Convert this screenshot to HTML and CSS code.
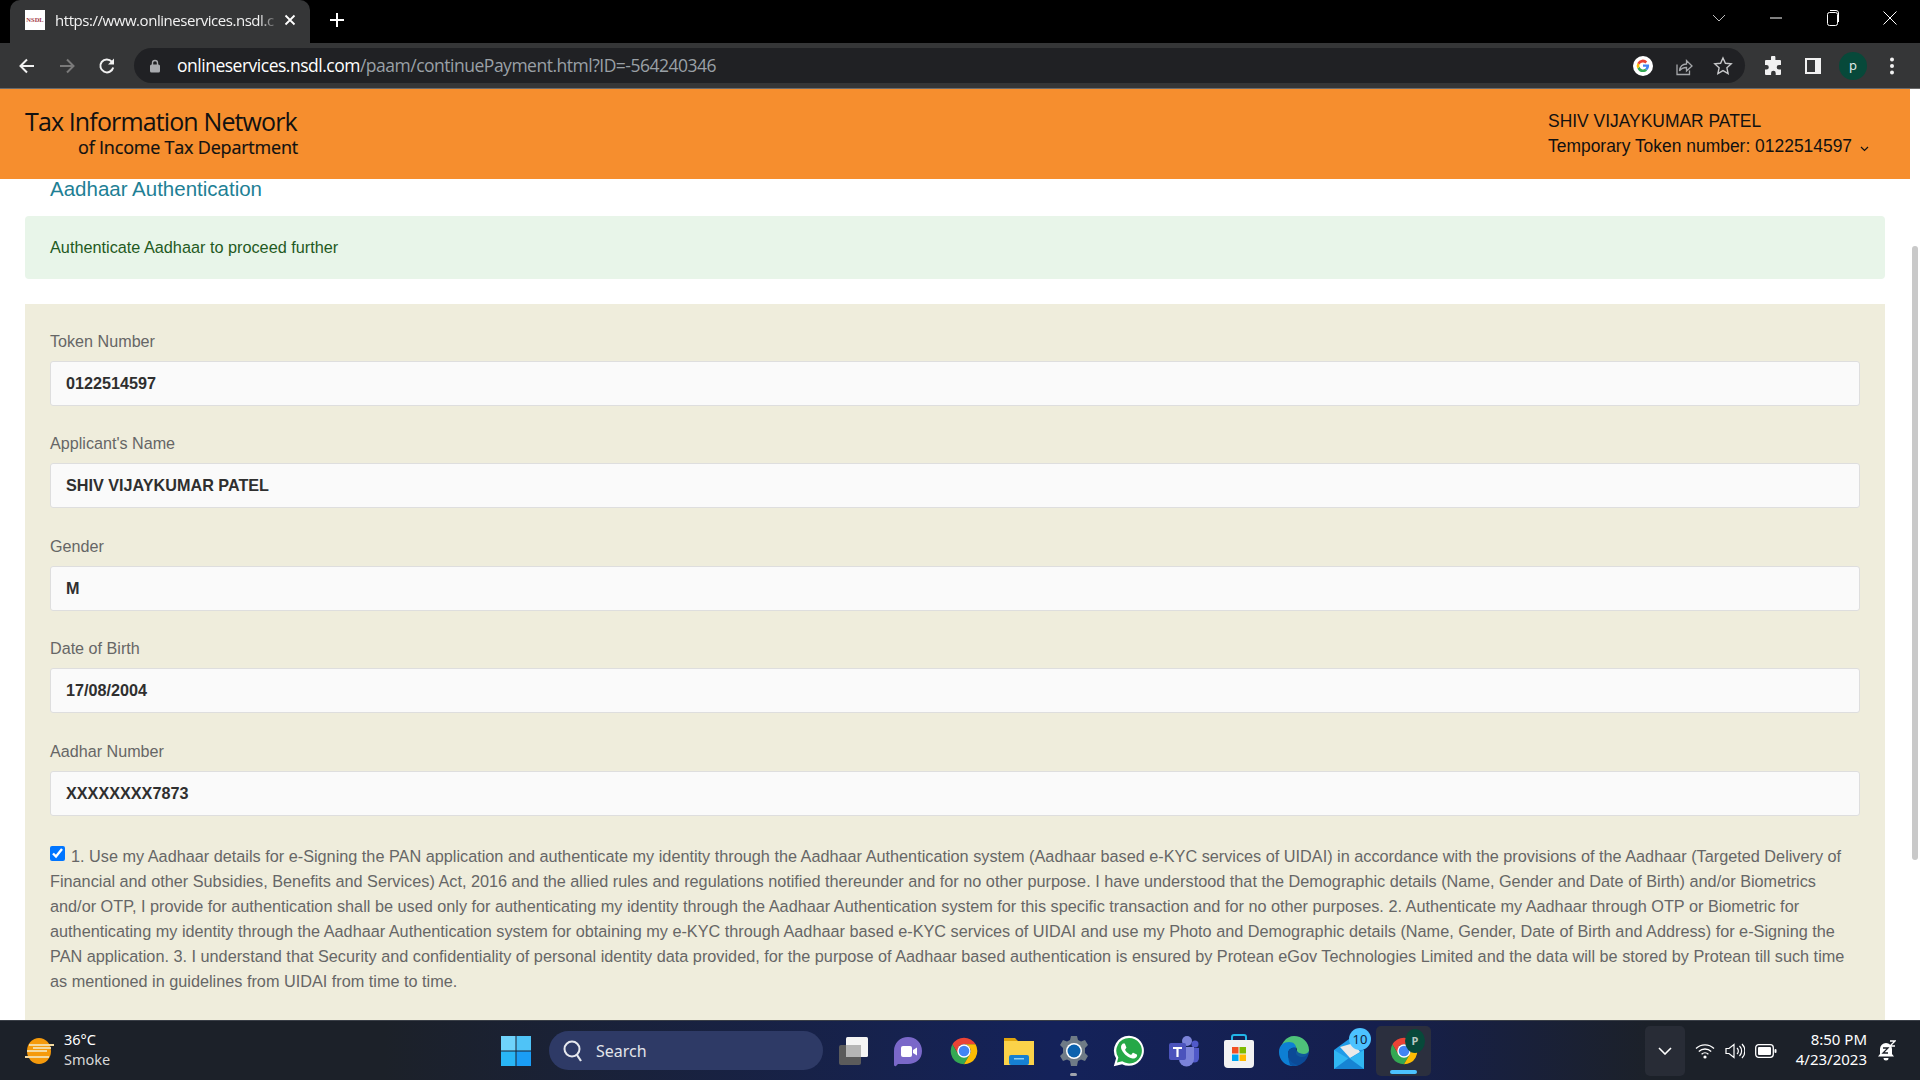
FILE: index.html
```html
<!DOCTYPE html>
<html lang="en">
<head>
<meta charset="utf-8">
<title>Aadhaar Authentication</title>
<link rel="stylesheet" href="styles.css">
</head>
<body>
<svg class="defs" width="0" height="0" aria-hidden="true">
  <symbol id="chrome" viewBox="0 0 24 24">
    <path fill="#ea4335" d="M3.34 7A10 10 0 0 1 20.66 7H12a5 5 0 0 0-4.33 2.5V14.5z"/>
    <path fill="#34a853" d="M3.34 7A10 10 0 0 0 12 22l4.33-7.5h-8.66z"/>
    <path fill="#fbbc04" d="M20.66 7A10 10 0 0 1 12 22l4.33-7.5A5 5 0 0 0 12 7z"/>
    <circle cx="12" cy="12" r="5" fill="#fff"/>
    <circle cx="12" cy="12" r="4" fill="#4285f4"/>
  </symbol>
</svg>

<div class="window">
  <div class="tabstrip">
    <div class="tab">
      <span class="favicon">NSDL</span>
      <span class="tab-title">https://www.onlineservices.nsdl.c</span>
      <svg class="tab-close" width="12" height="12" viewBox="0 0 12 12"><path d="M1.5 1.5l9 9M10.5 1.5l-9 9" stroke="#fff" stroke-width="1.8"/></svg>
    </div>
    <svg class="new-tab" width="16" height="16" viewBox="0 0 16 16"><path d="M8 1v14M1 8h14" stroke="#fff" stroke-width="2"/></svg>
    <div class="caption">
      <svg class="cap" width="14" height="10" viewBox="0 0 14 10"><path d="M1 2l6 6 6-6" fill="none" stroke="#bdbdbd"/></svg>
      <svg class="cap" width="14" height="14" viewBox="0 0 14 14"><path d="M1 7h12" stroke="#fff"/></svg>
      <svg class="cap" width="14" height="18" viewBox="0 0 14 18"><rect x="1.5" y="3.5" width="10" height="13" rx="2" fill="none" stroke="#fff"/><path d="M4 1.5h6a2.5 2.5 0 0 1 2.5 2.5v9" fill="none" stroke="#fff"/></svg>
      <svg class="cap" width="14" height="14" viewBox="0 0 14 14"><path d="M.5.5l13 13M13.500.5l-13 13" stroke="#fff"/></svg>
    </div>
  </div>

  <div class="toolbar">
    <svg class="nav" width="18" height="18" viewBox="0 0 18 18"><path d="M16 9H3M9 2.500L2.500 9 9 15.500" fill="none" stroke="#f1f1f1" stroke-width="2"/></svg>
    <svg class="nav" width="18" height="18" viewBox="0 0 18 18"><path d="M2 9h13M9 2.500L15.500 9 9 15.500" fill="none" stroke="#7a7a7a" stroke-width="2"/></svg>
    <svg class="nav" width="18" height="18" viewBox="0 0 18 18"><path d="M15.200 10.500A6.500 6.500 0 1 1 13.800 4.600" fill="none" stroke="#f1f1f1" stroke-width="2"/><path d="M16 1.500V7.500H10z" fill="#f1f1f1"/></svg>
    <div class="omnibox">
      <svg class="lock" width="12" height="14" viewBox="0 0 12 14"><path d="M3.500 6V4a2.500 2.500 0 0 1 5 0v2" fill="none" stroke="#a9abaf" stroke-width="1.400"/><rect x="1" y="5.500" width="10" height="8" rx="1.500" fill="#a9abaf"/></svg>
      <div class="url"><span class="url-host">onlineservices.nsdl.com</span>/paam/continuePayment.html?ID=-564240346</div>
      <div class="omni-icons">
        <svg width="20" height="20" viewBox="0 0 20 20"><circle cx="10" cy="10" r="10" fill="#fff"/><path d="M15.900 8.500H10v2.300h3.400a3.500 3.500 0 0 1-1.300 1.900l2 1.600c1.200-1.100 2-2.800 2-4.700 0-.4 0-.8-.2-1.100z" fill="#4285f4"/><path d="M10 16c1.600 0 3-.5 4.100-1.600l-2-1.600a3.700 3.700 0 0 1-5.600-2L4.400 12.400A6 6 0 0 0 10 16z" fill="#34a853"/><path d="M6.500 10.800a3.600 3.600 0 0 1 0-2.300L4.400 6.900a6 6 0 0 0 0 5.500z" fill="#fbbc05"/><path d="M10 6.400c.9 0 1.700.3 2.400 1l1.800-1.800A6 6 0 0 0 4.400 6.900l2.100 1.600A3.600 3.600 0 0 1 10 6.400z" fill="#ea4335"/></svg>
        <svg width="20" height="20" viewBox="0 0 20 20"><path d="M4 8.500V18.500H16.500V14.500" fill="none" stroke="#a5a7aa" stroke-width="1.300"/><path d="M6.500 15c.5-4.500 3.500-7 7-7V4.500l5.500 5.500-5.500 5v-3.500c-3 0-5.500 1.200-7 3.500z" fill="none" stroke="#a5a7aa" stroke-width="1.300"/></svg>
        <svg width="20" height="20" viewBox="0 0 20 20"><path d="M10 2l2.400 5.300 5.800.6-4.300 3.900 1.200 5.700-5.100-2.900-5.100 2.900 1.200-5.700L1.800 7.900l5.800-.6z" fill="none" stroke="#c8c9cb" stroke-width="1.400"/></svg>
      </div>
    </div>
    <div class="tool-icons">
      <svg width="20" height="20" viewBox="0 0 20 20"><path d="M8 1.500a2.200 2.200 0 0 1 4.400 0V4H17a1 1 0 0 1 1 1v4h-2a2.300 2.300 0 0 0 0 4.600h2V18a1 1 0 0 1-1 1h-4.300v-2a2.300 2.300 0 0 0-4.600 0v2H3a1 1 0 0 1-1-1v-4.500h1.500a2.300 2.300 0 0 0 0-4.600H2V5a1 1 0 0 1 1-1h5z" fill="#f1f1f1"/></svg>
      <svg width="20" height="20" viewBox="0 0 20 20"><path d="M2 2h16v16H2zM4 4v12h8V4z" fill="#f1f1f1" fill-rule="evenodd"/></svg>
      <span class="avatar">p</span>
      <svg class="menu-dots" width="6" height="20" viewBox="0 0 6 20"><circle cx="3" cy="3.500" r="2" fill="#f1f1f1"/><circle cx="3" cy="10" r="2" fill="#f1f1f1"/><circle cx="3" cy="16.500" r="2" fill="#f1f1f1"/></svg>
    </div>
  </div>

  <div class="viewport">
    <main class="page">
      <header class="site-header">
        <div class="logo">
          <div class="logo-main">Tax Information Network</div>
          <div class="logo-sub">of Income Tax Department</div>
        </div>
        <div class="user">
          <div>SHIV VIJAYKUMAR PATEL</div>
          <div class="user-token">Temporary Token number: 0122514597
            <svg class="user-caret" width="9" height="6" viewBox="0 0 9 6"><path d="M1 1l3.500 3.500L8 1" fill="none" stroke="#111" stroke-width="1.200"/></svg>
          </div>
        </div>
      </header>

      <div class="content">
        <h1 class="title">Aadhaar Authentication</h1>
        <div class="alert">Authenticate Aadhaar to proceed further</div>
        <form class="panel">
          <div class="field"><div class="field-label">Token Number</div><div class="field-value">0122514597</div></div>
          <div class="field"><div class="field-label">Applicant's Name</div><div class="field-value">SHIV VIJAYKUMAR PATEL</div></div>
          <div class="field"><div class="field-label">Gender</div><div class="field-value">M</div></div>
          <div class="field"><div class="field-label">Date of Birth</div><div class="field-value">17/08/2004</div></div>
          <div class="field"><div class="field-label">Aadhar Number</div><div class="field-value">XXXXXXXX7873</div></div>
          <p class="terms"><input class="terms-check" type="checkbox" checked>1. Use my Aadhaar details for e-Signing the PAN application and authenticate my identity through the Aadhaar Authentication system (Aadhaar based e-KYC services of UIDAI) in accordance with the provisions of the Aadhaar (Targeted Delivery of Financial and other Subsidies, Benefits and Services) Act, 2016 and the allied rules and regulations notified thereunder and for no other purpose. I have understood that the Demographic details (Name, Gender and Date of Birth) and/or Biometrics and/or OTP, I provide for authentication shall be used only for authenticating my identity through the Aadhaar Authentication system for this specific transaction and for no other purposes. 2. Authenticate my Aadhaar through OTP or Biometric for authenticating my identity through the Aadhaar Authentication system for obtaining my e-KYC through Aadhaar based e-KYC services of UIDAI and use my Photo and Demographic details (Name, Gender, Date of Birth and Address) for e-Signing the PAN application. 3. I understand that Security and confidentiality of personal identity data provided, for the purpose of Aadhaar based authentication is ensured by Protean eGov Technologies Limited and the data will be stored by Protean till such time as mentioned in guidelines from UIDAI from time to time.</p>
        </form>
      </div>
    </main>
    <div class="scrollbar"><div class="thumb"></div></div>
  </div>

  <footer class="taskbar">
    <div class="weather">
      <svg width="32" height="28" viewBox="0 0 32 28"><ellipse cx="16" cy="14" rx="12" ry="13" fill="#f59a0c"/><path d="M6 8h25M4 14h20M2 20h24M10 11h18" stroke="#f3d9a0" stroke-width="2.200"/></svg>
      <div class="weather-text"><div>36°C</div><div class="weather-sub">Smoke</div></div>
    </div>
    <div class="center">
      <div class="tb-cell">
        <svg width="30" height="30" viewBox="0 0 30 30"><rect width="14.500" height="14.500" fill="#6fd3fb"/><rect x="15.500" width="14.500" height="14.500" fill="#4fc3f7"/><rect y="15.500" width="14.500" height="14.500" fill="#29b6f6"/><rect x="15.500" y="15.500" width="14.500" height="14.500" fill="#1a9df5"/></svg>
      </div>
      <div class="search">
        <svg width="22" height="24" viewBox="0 0 22 24"><circle cx="10" cy="10" r="7.500" fill="none" stroke="#e6e8ee" stroke-width="2"/><path d="M15 16l4 6" stroke="#e6e8ee" stroke-width="2.200"/></svg>
        <span>Search</span>
      </div>
      <div class="tb-cell">
        <svg width="32" height="32" viewBox="0 0 32 32"><rect x="1" y="10" width="22" height="20" rx="2" fill="#5b5b5b"/><rect x="8" y="2" width="22" height="20" rx="1.500" fill="#f4f4f4"/><rect x="8" y="10" width="15" height="12" fill="#b5b5b5"/></svg>
      </div>
      <div class="tb-cell">
        <svg class="meet" width="32" height="32" viewBox="0 0 32 32"><path d="M16 2c8 0 14 6 14 14s-6 13-14 13H6l-2 2c-1 .5-2 0-2-1.500V16C2 8 8 2 16 2z" fill="#7a68c9"/><rect x="9" y="11" width="11" height="11" rx="2" fill="#fff"/><path d="M21 15l4-2.500v8L21 18z" fill="#fff"/></svg>
      </div>
      <div class="tb-cell"><svg width="32" height="32"><use href="#chrome"/></svg></div>
      <div class="tb-cell">
        <svg width="32" height="32" viewBox="0 0 32 32"><path d="M1 3h11l3 3h16v4H1z" fill="#e0a40c"/><rect x="1" y="6" width="30" height="24" fill="#fbd249"/><rect x="6" y="20" width="20" height="10" rx="2" fill="#1680d3"/><rect x="11" y="23" width="10" height="1.500" fill="#8fd0f5"/></svg>
      </div>
      <div class="tb-cell tb-running">
        <svg width="32" height="32" viewBox="0 0 32 32"><path d="M13 1h6l1 4 3 1.500 4-1.500 3 5-3 3v5l3 3-3 5-4-1.500L20 26l-1 5h-6l-1-5-3-1.500-4 1.500-3-5 3-3v-5L2 10l3-5 4 1.500L12 5z" fill="#6f7b86"/><circle cx="16" cy="16" r="8" fill="#fff"/><circle cx="16" cy="16" r="6.500" fill="#0c62ae"/></svg>
        <span class="run-dot"></span>
      </div>
      <div class="tb-cell">
        <svg width="32" height="32" viewBox="0 0 24 24"><path d="M12 .5A11.300 11.300 0 0 0 2.300 17.500L.6 23.500l6.200-1.600A11.300 11.300 0 1 0 12 .5z" fill="#fff"/><path d="M12 2.300a9.500 9.500 0 0 0-8 14.600l-1 3.800 3.900-1A9.500 9.500 0 1 0 12 2.300z" fill="#25a847"/><path fill="#fff" d="M17.472 14.382c-.297-.149-1.758-.867-2.030-.967-.273-.099-.471-.148-.670.150-.197.297-.767.966-.940 1.164-.173.199-.347.223-.644.075-.297-.150-1.255-.463-2.390-1.475-.883-.788-1.480-1.761-1.653-2.059-.173-.297-.018-.458.130-.606.134-.133.298-.347.446-.520.149-.174.198-.298.298-.497.099-.198.050-.371-.025-.520-.075-.149-.669-1.612-.916-2.207-.242-.579-.487-.500-.669-.510-.173-.008-.371-.010-.570-.010-.198 0-.520.074-.792.372-.272.297-1.040 1.016-1.040 2.479 0 1.462 1.065 2.875 1.213 3.074.149.198 2.096 3.200 5.077 4.487.709.306 1.262.489 1.694.625.712.227 1.360.195 1.871.118.571-.085 1.758-.719 2.006-1.413.248-.694.248-1.289.173-1.413-.074-.124-.272-.198-.570-.347z"/></svg>
      </div>
      <div class="tb-cell">
        <svg width="32" height="32" viewBox="0 0 32 32"><circle cx="19" cy="6" r="5" fill="#7b83d9"/><circle cx="27" cy="9" r="3.500" fill="#5059c9"/><path d="M22 13h9v10a4.500 4.500 0 0 1-9 0z" fill="#5059c9"/><path d="M11 12h15v12a7.500 7.500 0 0 1-15 0z" fill="#7b83d9"/><rect x="1" y="8" width="17" height="17" rx="2" fill="#4b53bc"/><path d="M5 12h9v2h-3.400v8H8.400v-8H5z" fill="#fff"/></svg>
      </div>
      <div class="tb-cell">
        <svg width="32" height="34" viewBox="0 0 32 34"><path d="M9 9V3a2 2 0 0 1 2-2h10a2 2 0 0 1 2 2v6" fill="none" stroke="#22b5e8" stroke-width="2"/><path d="M3 6h26a2 2 0 0 1 2 2v22a4 4 0 0 1-4 4H5a4 4 0 0 1-4-4V8a2 2 0 0 1 2-2z" fill="#f2f2f2"/><rect x="9" y="13" width="6.500" height="6.500" fill="#f25022"/><rect x="16.500" y="13" width="6.500" height="6.500" fill="#7fba00"/><rect x="9" y="20.500" width="6.500" height="6.500" fill="#00a4ef"/><rect x="16.500" y="20.500" width="6.500" height="6.500" fill="#ffb900"/></svg>
      </div>
      <div class="tb-cell">
        <svg width="32" height="32" viewBox="0 0 32 32"><path d="M16 1c8 0 15 6 15 14 0 4-3 7-7 7-3 0-6-2-6-4 0-1 1-2 1-3 0-3-3-5-6-5-6 0-11 5-12 10C2 9 8 1 16 1z" fill="#4ec27a"/><path d="M1 17C1 10 6 7 11 7c5 0 7 3 7 6-4-1-8 1-8 6 0 5 4 10 10 11-2 1-3 1-5 1C7 31 1 25 1 17z" fill="#0d7fd4"/><path d="M10 19c0-5 4-7 8-6 0 2 2 6 8 6 2 0 4-1 5-3 0 7-6 15-15 15-1 0-2 0-4-1-1-3-2-7-2-11z" fill="#0a4f9e" opacity=".9"/></svg>
      </div>
      <div class="tb-cell">
        <svg class="mail" width="30" height="30" viewBox="0 0 30 30"><path d="M0 11L15 0l15 11v19H0z" fill="#1f9be8"/><path d="M6 8l14-4 6 9-10 6z" fill="#e9e9e9"/><path d="M0 11l15 9 15-9v19H0z" fill="#30b7f3"/><path d="M0 30l15-11 15 11z" fill="#1684d3"/></svg>
        <span class="mail-badge">10</span>
      </div>
      <div class="tb-cell tb-active">
        <svg width="32" height="32"><use href="#chrome"/></svg>
        <span class="chrome-profile">P</span>
        <span class="active-bar"></span>
      </div>
    </div>
    <div class="tray">
      <div class="tray-btn"><svg width="14" height="8" viewBox="0 0 14 8"><path d="M1 1l6 6 6-6" fill="none" stroke="#fff" stroke-width="1.600"/></svg></div>
      <svg class="tray-ic" width="20" height="16" viewBox="0 0 20 16"><path d="M1 5.500a13 13 0 0 1 18 0M3.800 8.500a9 9 0 0 1 12.400 0M6.600 11.200a5 5 0 0 1 6.800 0" fill="none" stroke="#fff" stroke-width="1.300"/><circle cx="10" cy="14" r="1.600" fill="#fff"/></svg>
      <svg class="tray-ic" width="20" height="18" viewBox="0 0 20 18"><path d="M1 6.500h3L9 2.500v13l-5-4H1z" fill="none" stroke="#fff" stroke-width="1.200"/><path d="M12 6a4 4 0 0 1 0 6M14.500 4a7 7 0 0 1 0 10M17 2a10 10 0 0 1 0 14" fill="none" stroke="#fff" stroke-width="1.200"/></svg>
      <svg class="tray-ic" width="22" height="14" viewBox="0 0 22 14"><rect x=".7" y=".7" width="17.600" height="12.600" rx="3" fill="none" stroke="#fff" stroke-width="1.300"/><rect x="3" y="3" width="13" height="8" rx="1" fill="#fff"/><rect x="19.500" y="5" width="2" height="4" rx="1" fill="#fff"/></svg>
      <div class="clock"><div>8:50 PM</div><div>4/23/2023</div></div>
      <svg class="bell" width="18" height="22" viewBox="0 0 18 22"><path d="M8 3a6 6 0 0 1 6 6v5l2 2.500H0L2 14V9a6 6 0 0 1 6-6z" fill="#fff"/><path d="M5.500 18h5a2.500 2.500 0 0 1-5 0z" fill="#fff"/><path d="M5 8h5l-5 5h5" fill="none" stroke="#1c2129" stroke-width="1.300"/><path d="M12 1h5l-5 5h5" fill="none" stroke="#fff" stroke-width="1.300"/></svg>
    </div>
  </footer>
</div>
</body>
</html>
```
FILE: styles.css
```css
* { box-sizing: border-box; }
html, body { margin: 0; height: 100%; overflow: hidden; }
body { font-family: "Liberation Sans", Arial, sans-serif; background: #fff; }
.defs { display: block; height: 0; }
.window { display: flex; flex-direction: column; height: 1080px; }

/* Browser chrome */
.tabstrip { display: flex; align-items: center; height: 43px; background: #000; padding: 0 0 4px 10px; flex: none; }
.tab { display: flex; align-items: center; width: 300px; height: 43px; background: #353637; border-radius: 10px 10px 0 0; padding: 0 15px 4px; align-self: flex-end; margin-bottom: -4px; }
.favicon { width: 20px; height: 20px; background: #fff; color: #a33a48; font: bold 6.500px/20px "Liberation Serif", serif; text-align: center; overflow: hidden; flex: none; }
.tab-title { width: 219px; margin-left: 10px; font: 15px "Open Sans", sans-serif; color: #f2f2f2; white-space: nowrap; letter-spacing: -.45px; flex: none; -webkit-mask-image: linear-gradient(to right, #000 93%, rgba(0,0,0,.25)); mask-image: linear-gradient(to right, #000 93%, rgba(0,0,0,.25)); }
.tab-close { margin-left: 10px; flex: none; }
.new-tab { margin-left: 19px; }
.caption { margin-left: auto; display: flex; align-items: center; padding: 0 23px 4px 0; gap: 43px; }
.cap { flex: none; }

.toolbar { display: flex; align-items: center; height: 46px; background: #353637; border-bottom: 1px solid #6a6a6a; padding-left: 18px; flex: none; }
.nav { margin-right: 22px; flex: none; }
.nav:nth-child(3) { margin-right: 18px; }
.omnibox { display: flex; align-items: center; width: 1611px; height: 35px; background: #202124; border-radius: 18px; padding-left: 15px; flex: none; }
.lock { flex: none; }
.url { margin-left: 16px; padding-bottom: 2px; font: 17.500px "Open Sans", sans-serif; letter-spacing: -.49px; color: #9aa0a6; white-space: nowrap; }
.url-host { color: #fff; }
.omni-icons { margin-left: auto; display: flex; align-items: center; gap: 20px; padding-right: 12px; }
.tool-icons { display: flex; align-items: center; gap: 20px; margin-left: 18px; }
.avatar { width: 28px; height: 28px; border-radius: 50%; background: #07493a; color: #e8f0ee; font: 13px/26px "Open Sans", sans-serif; text-align: center; margin: 0 -4px; }
.menu-dots { margin-left: 6px; }

/* Page */
.viewport { flex: 1; min-height: 0; display: flex; overflow: hidden; }
.page { flex: 1; min-width: 0; }
.scrollbar { width: 10px; flex: none; padding: 157px 2px 0; }
.thumb { width: 6px; height: 614px; background: #c9c9c9; border-radius: 3px; }

.site-header { display: flex; justify-content: space-between; height: 90px; background: #f68e2e; padding: 18px 40px 0 25px; }
.logo { width: 273px; color: #111; }
.logo-main { font: 25px/28px "Open Sans", sans-serif; white-space: nowrap; letter-spacing: -.87px; }
.logo-sub { font: 18px/24px "Open Sans", sans-serif; text-align: right; white-space: nowrap; letter-spacing: -.2px; -webkit-text-stroke: .2px #111; }
.user { width: 322px; padding-top: 2px; font-size: 17.450px; line-height: 25px; color: #111; white-space: nowrap; }
.user-caret { margin-left: 3px; }

.content { padding: 0 25px; }
.title { margin: 0; padding: 0 25px; font-size: 20.500px; font-weight: 400; line-height: 20px; color: #1e7f95; height: 37px; }
.alert { height: 63px; padding: 0 25px; line-height: 63px; font-size: 16.250px; background: #e8f5e9; color: #1f5a22; border-radius: 4px; margin-bottom: 25px; }
.panel { background: #efeddc; padding: 25px 25px 40px; }
.field { margin-bottom: 25.400px; }
.field-label { font-size: 16.150px; line-height: 24px; color: #666; margin-bottom: 8px; }
.field-value { height: 45px; background: #fafafa; border: 1px solid #dedede; border-radius: 3px; padding: 0 15px; line-height: 43.500px; font-size: 16.200px; font-weight: 700; color: #2f2f2f; }
.terms { margin: 28px 0 0; font-size: 16.250px; line-height: 25px; color: #666; }
.terms-check { width: 15px; height: 15px; margin: 0 6px 0 0; vertical-align: 1px; }

/* Taskbar */
.taskbar { display: grid; grid-template-columns: 488px auto 1fr; align-items: center; height: 60px; flex: none; font-family: "Noto Sans", sans-serif; color: #fff; background: linear-gradient(to right, #1c2129 0, #1c2129 20%, #14225a 55%, #151f4d 72%, #1c2129 86%, #1c2129 100%); border-top: 1px solid #3a3f47; }
.weather { display: flex; align-items: center; padding: 0 0 4px 23px; }
.weather svg { flex: none; margin-top: 4px; }
.weather-text { margin-left: 9px; font-size: 14.500px; line-height: 20px; }
.weather-sub { color: #d8d8d8; }
.center { display: flex; align-items: center; }
.tb-cell { position: relative; display: flex; align-items: center; justify-content: center; width: 55px; height: 50px; flex: none; }
.search { display: flex; align-items: center; width: 274px; height: 39px; margin: 0 3px 0 6px; padding-left: 13px; background: #2e3a66; border-radius: 20px; font-size: 16px; color: #e3e5ea; gap: 12px; flex: none; }
.meet { margin-left: -2px; }
.run-dot { position: absolute; left: 24px; bottom: 0; width: 7px; height: 3px; background: #a0a4ac; border-radius: 2px; }
.mail { margin-top: 6px; }
.mail-badge { position: absolute; left: 28px; top: 2px; width: 22px; height: 22px; border-radius: 50%; background: #4cc2ff; color: #10243d; font-size: 13px; line-height: 22px; text-align: center; }
.tb-active { background: #2b2f3e; border-radius: 5px; }
.chrome-profile { position: absolute; left: 29px; top: 3px; width: 20px; height: 24px; border-radius: 50%; background: #07493a; color: #b8c8c2; font-size: 11px; font-weight: 700; line-height: 24px; text-align: center; }
.active-bar { position: absolute; left: 14px; bottom: 2px; width: 27px; height: 4px; border-radius: 2px; background: #4cc2ff; }
.tray { display: flex; align-items: center; justify-content: flex-end; padding-right: 24px; }
.tray-btn { display: flex; align-items: center; justify-content: center; width: 40px; height: 50px; background: #282c36; border-radius: 5px; margin-right: 10px; }
.tray-ic { margin-right: 10px; flex: none; }
.clock { width: 80px; padding-bottom: 4px; text-align: right; font-size: 15px; line-height: 20px; white-space: nowrap; }
.bell { margin-left: 11px; flex: none; }
```
